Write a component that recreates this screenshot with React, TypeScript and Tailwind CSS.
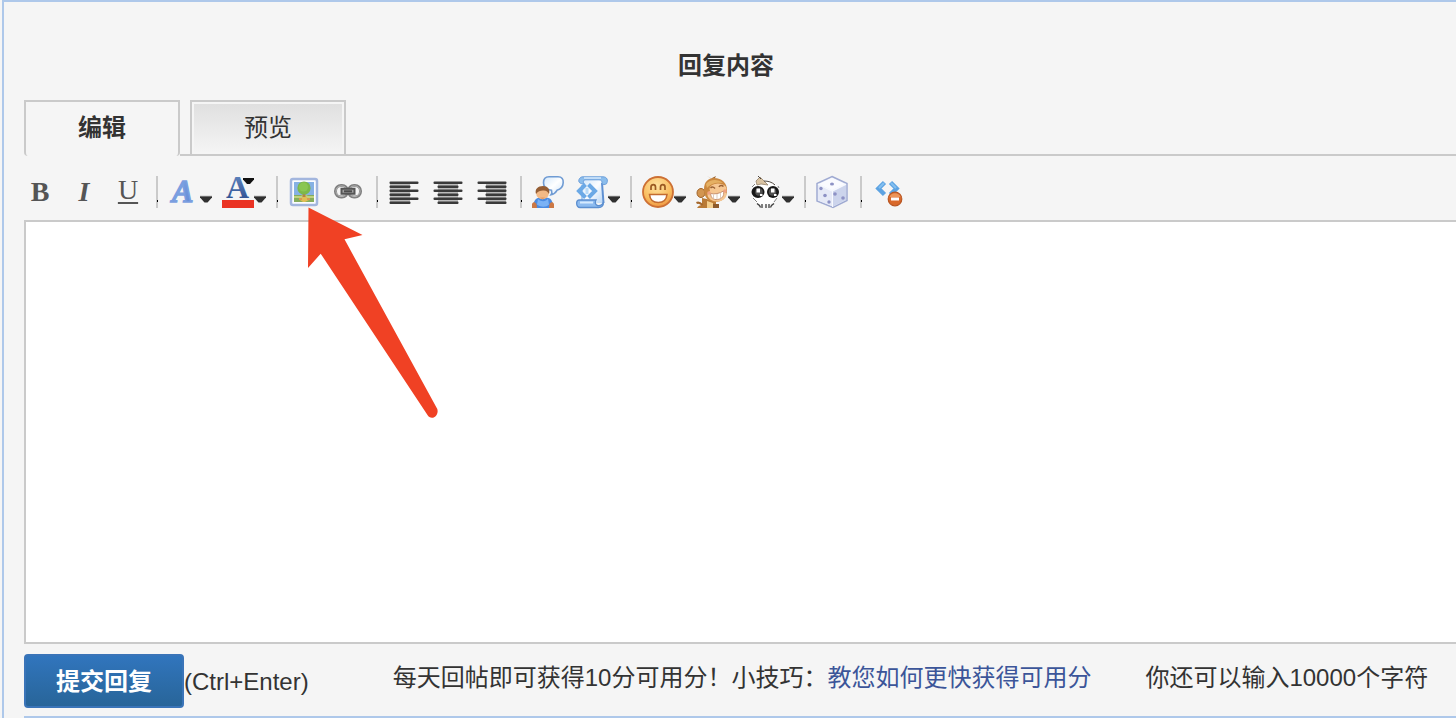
import { useState, type ReactNode } from "react";

const svgClass = "block h-8 w-8 shrink-0 overflow-visible";

function Letter({ children, className }: { children: ReactNode; className: string }) {
  return (
    <span className={`flex h-8 w-8 items-center justify-center font-["Liberation_Serif",serif] ${className}`}>
      {children}
    </span>
  );
}

function Caret() {
  return (
    <svg viewBox="0 0 12 32" className="block h-8 w-3 shrink-0" aria-hidden="true">
      <path d="M0 20h12v1.500L7.500 26.500h-3L0 21.500z" fill="#303030" />
      <path d="M0 19.800h12v0.900H0z" fill="#8a8a8a" />
    </svg>
  );
}

function Separator() {
  return (
    <span role="separator" className="flex h-8 w-0.5 shrink-0 justify-end bg-[#cacaca] pt-6">
      <span className="h-0.5 w-px bg-black" />
    </span>
  );
}

function Tool({ label, children, menu = false }: { label: string; children: ReactNode; menu?: boolean }) {
  return (
    <button
      type="button"
      title={label}
      aria-label={label}
      aria-haspopup={menu ? "menu" : undefined}
      className={menu ? "flex w-11 shrink-0" : "flex w-[34px] shrink-0"}
    >
      {children}
      {menu && <Caret />}
    </button>
  );
}

function FontIcon() {
  return (
    <svg viewBox="0 0 32 32" className={svgClass} aria-hidden="true">
      <defs>
        <linearGradient id="font-fill" x1="0" y1="0" x2="1" y2="1">
          <stop offset="0" stopColor="#8ab8ee" />
          <stop offset="0.55" stopColor="#7097dc" />
          <stop offset="1" stopColor="#6488d4" />
        </linearGradient>
      </defs>
      <text x="4" y="26" fontFamily="Liberation Serif, serif" fontSize="32" fontWeight="bold" fontStyle="italic" fill="url(#font-fill)" stroke="#7b9fe0" strokeWidth="1.500">
        A
      </text>
    </svg>
  );
}

function ColorIcon() {
  return (
    <svg viewBox="0 0 32 32" className={svgClass} aria-hidden="true">
      <defs>
        <linearGradient id="color-fill" x1="0" y1="0" x2="0" y2="1">
          <stop offset="0" stopColor="#6a90c8" />
          <stop offset="1" stopColor="#26478a" />
        </linearGradient>
      </defs>
      <text x="4" y="22" fontFamily="Liberation Serif, serif" fontSize="32" fontWeight="bold" fill="url(#color-fill)">
        A
      </text>
      <path d="M21 2h11v1.500L28 8h-3l-4-4.500z" fill="#111" />
      <path d="M0 24h32v8H0z" fill="#ea3323" />
    </svg>
  );
}

function PictureIcon() {
  return (
    <svg viewBox="0 0 32 32" className={svgClass} aria-hidden="true">
      <rect x="3" y="3" width="26" height="26" rx="2" fill="#fbfcff" stroke="#a3b6de" strokeWidth="2.500" />
      <path d="M6 6h20v14H6z" fill="#86b1e4" />
      <path d="M6 19h20v7H6z" fill="#86ad5c" />
      <path d="M6 20h7l3-2 4 2h6v2H6z" fill="#bfd27f" />
      <path d="M12 24l3-4h3l3 4-4 2h-2z" fill="#e0bd55" />
      <path d="M14.500 15h3v6h-3z" fill="#b18345" />
      <circle cx="16" cy="12" r="6.600" fill="#7db84a" />
      <circle cx="15.500" cy="11" r="4.500" fill="#8ac653" />
      <path d="M11 22h3v2h-3zM19 22h3v2h-3z" fill="#d99a50" />
    </svg>
  );
}

function LinkIcon() {
  return (
    <svg viewBox="0 0 32 32" className={svgClass} aria-hidden="true">
      <g fill="none">
        <rect x="3.500" y="9.500" width="12" height="11.500" rx="5.500" stroke="#808080" strokeWidth="3" />
        <rect x="16.500" y="9.500" width="12" height="11.500" rx="5.500" stroke="#808080" strokeWidth="3" />
        <rect x="4" y="10" width="11" height="10.500" rx="5" stroke="#b6b6b6" strokeWidth="1" />
        <rect x="17" y="10" width="11" height="10.500" rx="5" stroke="#b6b6b6" strokeWidth="1" />
        <path d="M9.500 12.800h13v5h-13z" fill="#a0a0a0" stroke="#555" strokeWidth="2" />
        <path d="M12 15.300h8" stroke="#4c4c4c" strokeWidth="2" />
      </g>
    </svg>
  );
}

function AlignIcon({ side }: { side: "left" | "center" | "right" }) {
  const short = { left: 2, center: 6, right: 10 }[side];
  return (
    <svg viewBox="0 0 32 32" className={svgClass} aria-hidden="true">
      <path d={`M${short} 6h20v22h-20z`} fill="#bcbcbc" />
      {[6, 14, 22].map((y) => (
        <g key={y} fill="#3a3a3a">
          <rect x="1.500" y={y - 0.5} width="29" height="2.500" rx="1" />
          <rect x={short - 0.5} y={y + 3.5} width="21" height="2.500" rx="1" />
        </g>
      ))}
    </svg>
  );
}

function QuoteIcon() {
  return (
    <svg viewBox="0 0 32 32" className={svgClass} aria-hidden="true">
      <defs>
        <linearGradient id="bubble-fill" x1="0" y1="0" x2="1" y2="1">
          <stop offset="0" stopColor="#d4e8fb" />
          <stop offset="0.5" stopColor="#fff" />
          <stop offset="1" stopColor="#cfe4fa" />
        </linearGradient>
      </defs>
      <path d="M17 0.800h9c4 0 5.500 2.500 5.200 6-0.200 4-2.500 6.500-6.200 7.500-1.500 2.500-3 4-6 4.500 1-1.500 1-3 0.500-4.500-5-0.500-8-3.500-8-7.500 0-3.500 2-6 5.500-6z" fill="url(#bubble-fill)" stroke="#6f9bd3" strokeWidth="1.600" />
      <path d="M2 32c-1.500-7 2-10.500 6-10.500h6c5 0 7.500 4 6.500 10.500z" fill="#4b8be2" />
      <path d="M6 23c3 3 8 3 10-0.500l1 6c-3 3-8 3-12 0z" fill="#7bb2f5" />
      <path d="M0 28c1-2.500 3-2.500 4.500 0L5 32H0zM22 28c-1-2.500-3-2.500-4.500 0L17 32h5z" fill="#cc7845" />
      <ellipse cx="10.500" cy="17.500" rx="6.300" ry="5.800" fill="#f3b985" />
      <path d="M4 18c-1.500-5 2-8 7-8 4.500 0 7.500 3 6 8-1-2-3-4-6-3.500-3 0-5 0.500-7 3.500z" fill="#955d33" />
      <path d="M8 21.500h5l-2.500 2z" fill="#e39a66" />
    </svg>
  );
}

function CodeIcon() {
  return (
    <svg viewBox="0 0 32 32" className={svgClass} aria-hidden="true">
      <defs>
        <linearGradient id="paper-fill" x1="0" y1="0" x2="1" y2="1">
          <stop offset="0" stopColor="#cfe5fa" />
          <stop offset="0.5" stopColor="#fbfdff" />
          <stop offset="1" stopColor="#b8d6f5" />
        </linearGradient>
      </defs>
      <path d="M6 3h20l1 24H6z" fill="url(#paper-fill)" />
      <path d="M26 7l1.500 20" stroke="#5f90d2" strokeWidth="2" />
      <path d="M6 24V9" stroke="#94bfec" strokeWidth="1.500" />
      <path d="M7 0.800h20c4 0 5.500 3.500 3.500 7-2 1-3 1-4.500 0 0.500-3-1-4-3-4H9C7 4 7 6 8 8 4 8 2 6 3 3.500 4 1.500 5 0.800 7 0.800z" fill="#8bbdec" stroke="#6b9edb" strokeWidth="1" />
      <path d="M8 2h17" stroke="#d4e9fc" strokeWidth="1.500" />
      <path d="M3 24h17c-1.500 2.500-0.500 5 1.500 5.500 2.500 0.500 5-1 6-3.500 0 4-1.500 5.500-5 5.500H4c-4 0-4.500-7-1-7.500z" fill="#8dbbef" stroke="#5c8fd0" strokeWidth="1.300" />
      <path d="M4 26.500h13" stroke="#d6eafe" strokeWidth="2" />
      <path d="M9.500 8.500L3 15l6.500 6.500M12.500 8.500L19 15l-6.500 6.500" fill="none" stroke="#6ba9e6" strokeWidth="4" />
      <path d="M11 12v6" stroke="#b9dbf8" strokeWidth="3" />
    </svg>
  );
}

function SmileIcon() {
  return (
    <svg viewBox="0 0 32 32" className={svgClass} aria-hidden="true">
      <defs>
        <radialGradient id="smile-fill" cx="0.45" cy="0.3" r="0.7">
          <stop offset="0" stopColor="#ffe3a0" />
          <stop offset="0.7" stopColor="#f9bd5f" />
          <stop offset="1" stopColor="#ee9440" />
        </radialGradient>
      </defs>
      <circle cx="16" cy="16" r="15" fill="url(#smile-fill)" stroke="#cd7034" strokeWidth="1.800" />
      <path d="M9 14v-3c0-3.300 4.500-3.300 4.500 0v3M18.500 14v-3c0-3.300 4.500-3.300 4.500 0v3" fill="none" stroke="#9b5a22" strokeWidth="1.700" />
      <path d="M7.500 18.500h17.500c-0.500 5.500-4 8-8.700 8s-8.300-2.500-8.800-8z" fill="#fff" stroke="#c36b30" strokeWidth="1.600" />
    </svg>
  );
}

function MonkeyIcon() {
  return (
    <svg viewBox="0 0 32 32" className={svgClass} aria-hidden="true">
      <path d="M1 32c1-2 3-3 5-3V22l14 3v7z" fill="#b97a36" />
      <path d="M0.500 27c2-1 4 0 6 2" fill="none" stroke="#a4672c" strokeWidth="2" />
      <path d="M11 25l6 2v5h-6z" fill="#f4cf8d" />
      <path d="M17 28h6v4h-6z" fill="#8c5a2c" />
      <path d="M11 0l4 2.500L20 0l-2 4z" fill="#9e642d" />
      <ellipse cx="5" cy="17" rx="4" ry="4.500" fill="#d29550" stroke="#a16429" />
      <path d="M8 13C8 6 12 2 18 2c8 0 13 5 13 12 0 8-5 12-12 12S8 21 8 13z" fill="#cb883f" />
      <path d="M10 8c4-5 12-5 17-1-6-1-12 0-16 5z" fill="#e5b063" />
      <ellipse cx="22" cy="13" rx="8.500" ry="5.500" fill="#f6c792" />
      <ellipse cx="21" cy="19" rx="9.500" ry="6.500" fill="#f6c792" />
      <path d="M14.500 12c1.500-1.500 3-1 4.500 0.500M23 11c1-2 3-2 4.500-0.500" fill="none" stroke="#996034" strokeWidth="1.500" />
      <path d="M14.500 17.500c4 1 9 0 13-2.500 1 5-1.500 8-6 8.500-4 0.500-6.500-1.500-7-6z" fill="#fff" stroke="#c99472" />
      <path d="M17.500 18.500v4M21 18v5M24.500 17v5" stroke="#d8bea8" strokeWidth="0.800" />
      <circle cx="13" cy="17" r="1.800" fill="#efa080" />
      <circle cx="29" cy="15" r="1.800" fill="#efa080" />
    </svg>
  );
}

function OnionIcon() {
  return (
    <svg viewBox="0 0 32 32" className={svgClass} aria-hidden="true">
      <path d="M4 8c5-5 16-5 22 1 4 6 2 14-4 18-5 3-11 3-15 0C1 23 0 13 4 8z" fill="#fff" />
      <path d="M6 5l4-4 4 4 4 4-7-1-4 1z" fill="#d9c3a2" stroke="#94816a" strokeWidth="0.800" />
      <path d="M8 0l3 3M14 5c4 0 8 1 11 4" fill="none" stroke="#4d453e" strokeWidth="1" />
      <ellipse cx="8" cy="16" rx="6.500" ry="6" fill="#181818" />
      <ellipse cx="23" cy="16" rx="6" ry="6" fill="#181818" />
      <circle cx="9" cy="16" r="3.800" fill="#505050" />
      <circle cx="22.500" cy="16" r="3.800" fill="#505050" />
      <path d="M6.500 12.500h3.500v4H6.500zM21 12.500h3.500v4H21zM10 18h2.500v2H10zM24 18h2.500v2H24z" fill="#fff" />
      <path d="M2 11l3-3M28 10l1 2M3 22l4 4M27 22l-3 4" stroke="#808080" strokeWidth="1" />
      <path d="M7 27.500l2.500 2 1 2M24 27.500l-2.500 2-1 2M12 28v4M16 28v4M19 28v4" fill="none" stroke="#3d3d3d" strokeWidth="1.300" />
    </svg>
  );
}

function DiceIcon() {
  return (
    <svg viewBox="0 0 32 32" className={svgClass} aria-hidden="true">
      <path d="M16 0.500L31 7.500v17L17 31.500 1 25V7.500z" fill="#eff2fb" stroke="#a0abd2" strokeWidth="1.500" />
      <path d="M16 2L29 8l-13 6L3 8z" fill="#fafbff" />
      <path d="M2 9l14 6.500V30L2 24.500z" fill="#e6eaf7" />
      <path d="M17 15.500L30 9v15l-13 6.500z" fill="#ccd4ec" />
      <path d="M2 8l14 7 14-7M16.500 15v16" fill="none" stroke="#f8faff" strokeWidth="1" />
      <g fill="#8d92c5">
        <ellipse cx="16" cy="8" rx="2" ry="1.500" />
        <circle cx="5" cy="12.500" r="1.700" />
        <circle cx="9" cy="19.500" r="1.800" />
        <circle cx="13" cy="26" r="1.700" />
        <circle cx="19" cy="18" r="1.800" />
        <circle cx="27" cy="22" r="1.800" />
      </g>
    </svg>
  );
}

function RemoveCodeIcon() {
  return (
    <svg viewBox="0 0 32 32" className={svgClass} aria-hidden="true">
      <path d="M12.500 6.500L6.500 12.500l6 6M18.500 6.500l6 6-6 6" fill="none" stroke="#5da3e2" strokeWidth="4.500" />
      <path d="M12 7l-5 5M19 7l5 5" stroke="#83bff0" strokeWidth="2" />
      <circle cx="23" cy="23" r="6.800" fill="#d9692b" stroke="#b95724" strokeWidth="1.200" />
      <path d="M17.500 21c1-5 10-5 11 0z" fill="#ed9559" />
      <path d="M19 21.500h8v3h-8z" fill="#fff" />
    </svg>
  );
}

function Pointer() {
  return (
    <svg
      viewBox="0 0 132 212"
      className="pointer-events-none absolute left-5 top-[31px] z-10 h-[212px] w-[132px]"
      aria-hidden="true"
    >
      <path
        d="M0.500 0.500L54.500 28 36.500 32.300 129.300 202c1.500 5-2.300 9-5.300 8.800-2 0-3.500-1-4.500-2.800L12.700 46.700 0 61z"
        fill="#f04124"
      />
    </svg>
  );
}

const limit = 10000;

export default function App() {
  const [tab, setTab] = useState("edit");
  const [text, setText] = useState("");

  const tabClass = (name: string) =>
    tab === name
      ? "relative z-10 h-14 w-39 rounded-b-sm border-2 border-b-0 border-[#cacaca] bg-[#f5f5f5] pb-0.5 font-bold"
      : "h-14 w-39 border-2 border-[#cacaca] bg-linear-to-b from-[#dfdfdf] to-[#f5f5f5] shadow-[inset_0_0_0_2px_#f5f5f5]";

  return (
    <div className='overflow-hidden bg-[#f5f5f5] pl-0.5 font-["Liberation_Sans","Noto_Sans_CJK_SC",sans-serif] text-2xl text-[#333]'>
      <main className="border-l-2 border-t-2 border-[#aec8ea]">
        <h1 className="pr-2 pt-12 text-center text-2xl font-bold">
          <label htmlFor="reply">回复内容</label>
        </h1>

        <form className="pl-5" onSubmit={(event) => event.preventDefault()}>
          <div className="flex pt-[18px]">
            <div role="tablist" className="flex">
              <button type="button" role="tab" aria-selected={tab === "edit"} onClick={() => setTab("edit")} className={tabClass("edit")}>
                编辑
              </button>
              <span className="w-2.5 border-b-2 border-[#cacaca]" />
              <button type="button" role="tab" aria-selected={tab === "preview"} onClick={() => setTab("preview")} className={tabClass("preview")}>
                预览
              </button>
            </div>
            <span className="grow border-b-2 border-[#cacaca]" />
          </div>

          <div role="toolbar" aria-label="工具栏" className="flex gap-2.5 pb-3 pt-5">
            <Tool label="粗体">
              <Letter className="text-[28px] font-bold text-[#555]">B</Letter>
            </Tool>
            <Tool label="斜体">
              <Letter className="text-[28px] font-bold italic text-[#555]">I</Letter>
            </Tool>
            <Tool label="下划线">
              <Letter className="pb-1 text-[28px] text-[#555] underline decoration-2 underline-offset-3">U</Letter>
            </Tool>
            <Separator />
            <Tool label="字体" menu><FontIcon /></Tool>
            <Tool label="颜色" menu><ColorIcon /></Tool>
            <Separator />
            <div className="relative flex">
              <Tool label="图片"><PictureIcon /></Tool>
              <Pointer />
            </div>
            <Tool label="链接"><LinkIcon /></Tool>
            <Separator />
            <Tool label="左对齐"><AlignIcon side="left" /></Tool>
            <Tool label="居中"><AlignIcon side="center" /></Tool>
            <Tool label="右对齐"><AlignIcon side="right" /></Tool>
            <Separator />
            <Tool label="引用"><QuoteIcon /></Tool>
            <Tool label="代码" menu><CodeIcon /></Tool>
            <Separator />
            <Tool label="表情" menu><SmileIcon /></Tool>
            <Tool label="猴子表情" menu><MonkeyIcon /></Tool>
            <Tool label="洋葱表情" menu><OnionIcon /></Tool>
            <Separator />
            <Tool label="骰子"><DiceIcon /></Tool>
            <Separator />
            <Tool label="清除代码"><RemoveCodeIcon /></Tool>
          </div>

          <textarea
            id="reply"
            value={text}
            maxLength={limit}
            readOnly={tab === "preview"}
            onChange={(event) => setText(event.target.value)}
            className="block h-106 w-full resize-none border-2 border-r-0 border-[#cacaca] bg-white p-3 outline-none"
          />

          <div className="flex items-center whitespace-nowrap border-b-2 border-[#aec8ea] pb-2 pt-2.5">
            <button
              type="submit"
              className="h-[54px] w-40 shrink-0 rounded-sm border-2 border-[#3a74b8] bg-linear-to-b from-[#3175bd] to-[#286599] pt-0.5 font-bold text-white"
            >
              提交回复
            </button>
            <span className="pt-0.5">(Ctrl+Enter)</span>
            <p className="ml-21 pb-1.5">
              每天回帖即可获得10分可用分！小技巧：
              <a href="#tips" className="text-[#3c5599]">教您如何更快获得可用分</a>
            </p>
            <p className="ml-[54px] pb-1.5">你还可以输入{limit - text.length}个字符</p>
          </div>
        </form>
      </main>
    </div>
  );
}
